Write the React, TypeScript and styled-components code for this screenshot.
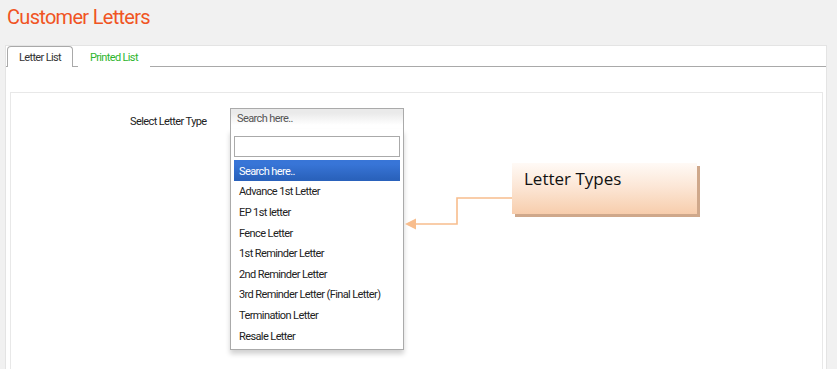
import styled, { createGlobalStyle } from 'styled-components';

const GlobalStyle = createGlobalStyle`
  html, body {
    margin: 0;
    padding: 0;
  }
  body {
    background: #f1f1f1;
    font-family: Roboto, "Liberation Sans", sans-serif;
    color: #222;
  }
`;

const Page = styled.div`
  position: relative;
  width: 837px;
  height: 369px;
  overflow: hidden;
  padding: 0 10px 0 5px;
  box-sizing: border-box;
`;

const Title = styled.h1`
  margin: 0;
  height: 45px;
  padding: 4px 0 0 2px;
  box-sizing: border-box;
  font-size: 20px;
  line-height: 26px;
  font-weight: 400;
  letter-spacing: -0.7px;
  color: #f05423;
`;

const TabPanel = styled.div`
  height: 324px;
  background: #fff;
  border: 1px solid #e4e4e4;
  border-bottom: none;
  display: flex;
  flex-direction: column;
`;

const TabNav = styled.div`
  display: flex;
  height: 20px;
  padding-left: 1px;
  border-bottom: 1px solid #a9a9a9;
`;

interface TabProps {
  $active?: boolean;
}

const Tab = styled.div<TabProps>`
  display: flex;
  align-items: center;
  height: 21px;
  box-sizing: border-box;
  margin: 0 5px -1px 0;
  padding: 0 11px;
  font-size: 11px;
  letter-spacing: -0.65px;
  color: ${(p) => (p.$active ? '#333' : '#2db52d')};
  background: #fff;
  border: 1px solid ${(p) => (p.$active ? '#a9a9a9' : 'transparent')};
  border-bottom: none;
  border-radius: 4px 4px 0 0;
  cursor: pointer;
`;

const TabContent = styled.div`
  flex: 1;
  display: flex;
  padding: 25px 3px 0 4px;
`;

const Card = styled.div`
  flex: 1;
  border: 1px solid #e8e8e8;
  border-bottom: none;
  padding: 15px 0 0 119px;
`;

const FormRow = styled.div`
  display: flex;
  align-items: flex-start;
`;

const Label = styled.label`
  width: 100px;
  padding-top: 7px;
  font-size: 11px;
  letter-spacing: -0.6px;
  color: #222;
`;

const Select = styled.div`
  position: relative;
  width: 174px;
  font-size: 11px;
  letter-spacing: -0.6px;
`;

const SelectHead = styled.div`
  height: 21px;
  box-sizing: border-box;
  padding-left: 6px;
  line-height: 20px;
  color: #555;
  border: 1px solid #aaa;
  border-bottom: none;
  background: linear-gradient(#eaeaea 20%, #fff 80%);
`;

const Drop = styled.div`
  position: absolute;
  top: 100%;
  left: 0;
  right: 0;
  padding: 7px 3px 4px;
  background: #fff;
  border: 1px solid #aaa;
  border-top: none;
  box-shadow: 0 4px 5px rgba(0, 0, 0, 0.18);
`;

const SearchInput = styled.input`
  display: block;
  width: 100%;
  height: 21px;
  box-sizing: border-box;
  margin: 0;
  border: 1px solid #aaa;
  outline: none;
  font: inherit;
`;

const Results = styled.ul`
  list-style: none;
  margin: 3px 0 0;
  padding: 0;
`;

interface ResultProps {
  $highlighted?: boolean;
}

const Result = styled.li<ResultProps>`
  display: flex;
  align-items: center;
  height: 20.6px;
  padding: 2px 0 0 5px;
  box-sizing: border-box;
  color: ${(p) => (p.$highlighted ? '#fff' : '#222')};
  background: ${(p) =>
    p.$highlighted ? 'linear-gradient(#3875d7 20%, #2a62bc 90%)' : 'transparent'};
`;

const Annotation = styled.div`
  position: absolute;
  left: 405px;
  top: 163px;
  display: flex;
  align-items: flex-start;
`;

const Callout = styled.div`
  width: 185px;
  height: 51px;
  box-sizing: border-box;
  padding: 4px 0 0 12px;
  font-family: "Open Sans", "Liberation Sans", sans-serif;
  font-size: 17px;
  line-height: 23px;
  color: #111;
  background: linear-gradient(180deg, #fffaf6 0%, #fce7d7 45%, #f7cdac 100%);
  box-shadow: 3px 3px 0 #cfa88b;
`;

const letterTypes = [
  'Advance 1st Letter',
  'EP 1st letter',
  'Fence Letter',
  '1st Reminder Letter',
  '2nd Reminder Letter',
  '3rd Reminder Letter (Final Letter)',
  'Termination Letter',
  'Resale Letter',
];

export default function App() {
  return (
    <Page>
      <GlobalStyle />
      <Title>Customer Letters</Title>
      <TabPanel>
        <TabNav>
          <Tab $active>Letter List</Tab>
          <Tab>Printed List</Tab>
        </TabNav>
        <TabContent>
          <Card>
            <FormRow>
              <Label>Select Letter Type</Label>
              <Select>
                <SelectHead>Search here..</SelectHead>
                <Drop>
                  <SearchInput type="text" />
                  <Results>
                    <Result $highlighted>Search here..</Result>
                    {letterTypes.map((t) => (
                      <Result key={t}>{t}</Result>
                    ))}
                  </Results>
                </Drop>
              </Select>
            </FormRow>
          </Card>
        </TabContent>
      </TabPanel>
      <Annotation>
        <svg width="107" height="68" viewBox="0 0 107 68">
          <polyline
            points="107,35 52,35 52,61 9,61"
            fill="none"
            stroke="#f8bd8d"
            strokeWidth="1.6"
          />
          <polygon points="0,61 11,55.5 11,66.5" fill="#f8bd8d" />
        </svg>
        <Callout>Letter Types</Callout>
      </Annotation>
    </Page>
  );
}
